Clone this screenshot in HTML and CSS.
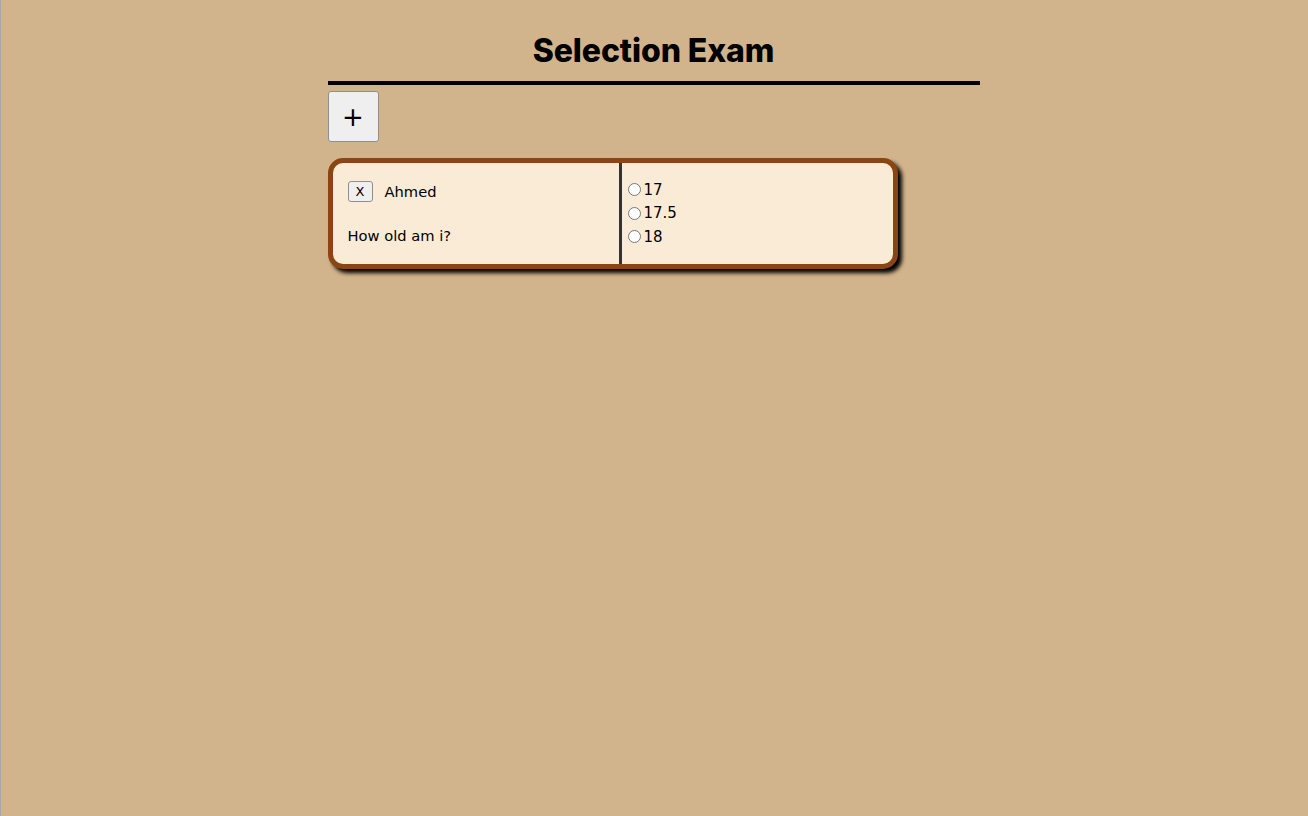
FILE: index.html
```html
<!DOCTYPE html>
<html lang="en">
<head>
<meta charset="utf-8">
<title>Selection Exam</title>
<link rel="stylesheet" href="styles.css">
</head>
<body>
<div class="page">
  <h1 class="title">Selection Exam</h1>
  <button class="add-btn" type="button">+</button>
  <div class="card">
    <div class="card-left">
      <div class="name-row">
        <button class="del-btn" type="button">X</button>
        <span class="name">Ahmed</span>
      </div>
      <div class="question">How old am i?</div>
    </div>
    <div class="card-right">
      <label class="opt"><input type="radio" name="q1"><span>17</span></label>
      <label class="opt"><input type="radio" name="q1"><span>17.5</span></label>
      <label class="opt"><input type="radio" name="q1"><span>18</span></label>
    </div>
  </div>
</div>
</body>
</html>
```

FILE: styles.css
```css
html, body {
  margin: 0;
  padding: 0;
}
body {
  background: #d2b48c;
  min-height: 816px;
  border-left: 1px solid #a8a8a8;
  box-sizing: border-box;
  font-family: "DejaVu Sans", sans-serif;
}
.page {
  width: 652px;
  margin: 0 auto;
  padding-top: 32px;
  transform: translateX(-1px);
}
.title {
  margin: 0;
  font-family: Inter, Roboto, "Liberation Sans", sans-serif;
  font-weight: 800;
  font-size: 32px;
  line-height: 38px;
  text-align: center;
  letter-spacing: -0.1px;
  padding-bottom: 11px;
  border-bottom: 4px solid #000;
  color: #000;
}
.add-btn {
  display: block;
  margin-top: 6px;
  width: 51px;
  height: 51px;
  padding: 0;
  font-family: "DejaVu Sans", sans-serif;
  font-size: 26px;
  line-height: 1;
  color: #000;
  background: #efefef;
  border: 1px solid #8f8f8f;
  border-radius: 3px;
}
.card {
  margin-top: 16px;
  width: 570px;
  height: 111px;
  box-sizing: border-box;
  display: flex;
  background: #faebd7;
  border: 5px solid #8b4513;
  border-radius: 15px;
  box-shadow: 4px 4px 4px #000;
}
.card-left {
  width: 289px;
  box-sizing: border-box;
  padding: 18px 15px 0 15px;
  border-right: 3px solid #333;
}
.name-row {
  display: flex;
  align-items: center;
  gap: 12px;
  height: 21px;
}
.del-btn {
  width: 25px;
  height: 21px;
  padding: 0;
  font-family: "DejaVu Sans", sans-serif;
  font-size: 13px;
  color: #000;
  background: #efefef;
  border: 1px solid #8f8f8f;
  border-radius: 3px;
}
.name {
  font-size: 14.7px;
  color: #000;
}
.question {
  margin-top: 25px;
  font-size: 14.7px;
  color: #000;
}
.card-right {
  flex: 1;
  padding-top: 15px;
  display: flex;
  flex-direction: column;
}
.opt {
  display: flex;
  align-items: center;
  height: 23.5px;
  font-size: 15px;
  color: #000;
}
.opt input {
  width: 13px;
  height: 13px;
  margin: 0 3px 0 6px;
}
```
